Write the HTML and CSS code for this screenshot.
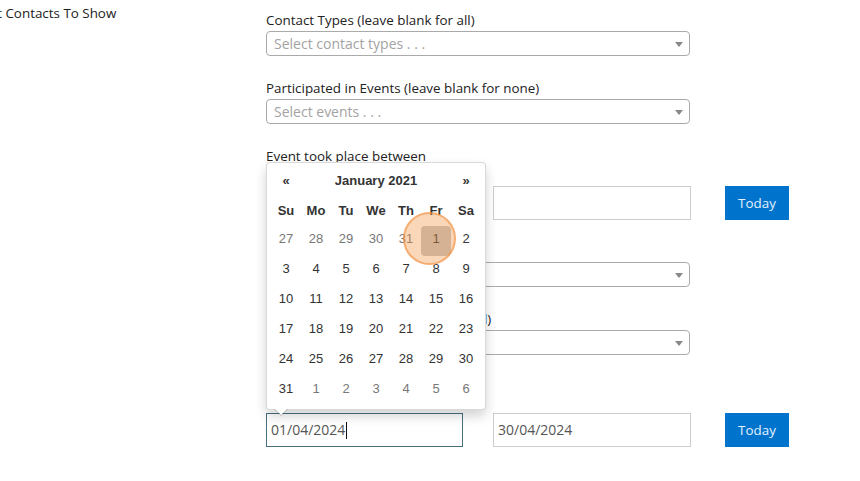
FILE: index.html
```html
<!DOCTYPE html>
<html lang="en">
<head>
<meta charset="utf-8">
<title>Select Contacts To Show</title>
<link rel="stylesheet" href="styles.css">
</head>
<body>
<div class="page">
  <aside class="side">
    <h2 class="side-title">Select Contacts To Show</h2>
  </aside>
  <form class="form">
    <div class="group">
      <label class="label">Contact Types (leave blank for all)</label>
      <div class="select"><span class="ph">Select contact types . . .</span><span class="arrow"></span></div>
    </div>
    <div class="group">
      <label class="label">Participated in Events (leave blank for none)</label>
      <div class="select"><span class="ph">Select events . . .</span><span class="arrow"></span></div>
    </div>
    <div class="group group-date">
      <label class="label label-date">Event took place between</label>
      <div class="date-row">
        <div class="field"></div>
        <div class="field field-2"></div>
        <button type="button" class="btn">Today</button>
      </div>
    </div>
    <div class="group">
      <label class="label">Event Status</label>
      <div class="select"><span class="ph"></span><span class="arrow"></span></div>
    </div>
    <div class="group">
      <label class="label">Contact Statuses (leave blank for all)</label>
      <div class="select"><span class="ph"></span><span class="arrow"></span></div>
    </div>
    <div class="group group-last">
      <label class="label label-last">Contact created between</label>
      <div class="date-row date-row-active">
        <div class="field field-focus">01/04/2024<span class="cursor"></span></div>
        <div class="field field-2">30/04/2024</div>
        <button type="button" class="btn">Today</button>
        <div class="datepicker">
          <table class="cal">
            <thead>
              <tr><th class="nav">&laquo;</th><th class="month" colspan="5">January 2021</th><th class="nav">&raquo;</th></tr>
              <tr class="dow"><th>Su</th><th>Mo</th><th>Tu</th><th>We</th><th>Th</th><th>Fr</th><th>Sa</th></tr>
            </thead>
            <tbody>
              <tr><td class="old">27</td><td class="old">28</td><td class="old">29</td><td class="old">30</td><td class="old">31</td><td class="active">1<span class="click"></span></td><td>2</td></tr>
              <tr><td>3</td><td>4</td><td>5</td><td>6</td><td>7</td><td>8</td><td>9</td></tr>
              <tr><td>10</td><td>11</td><td>12</td><td>13</td><td>14</td><td>15</td><td>16</td></tr>
              <tr><td>17</td><td>18</td><td>19</td><td>20</td><td>21</td><td>22</td><td>23</td></tr>
              <tr><td>24</td><td>25</td><td>26</td><td>27</td><td>28</td><td>29</td><td>30</td></tr>
              <tr><td>31</td><td class="old">1</td><td class="old">2</td><td class="old">3</td><td class="old">4</td><td class="old">5</td><td class="old">6</td></tr>
            </tbody>
          </table>
        </div>
      </div>
    </div>
  </form>
</div>
</body>
</html>
```
FILE: styles.css
```css
* { box-sizing: border-box; }
html, body { margin: 0; padding: 0; background: #fff; }
body {
  font-family: "Open Sans", "Liberation Sans", sans-serif;
  font-size: 13.4px;
  color: #222;
}
.page {
  display: flex;
  align-items: flex-start;
}
.side {
  width: 266px;
  flex: none;
}
.side-title {
  margin: 3px 0 0 -35px;
  font-size: 13.4px;
  font-weight: 400;
  line-height: 20px;
  color: #222;
  white-space: nowrap;
}
.form {
  width: 530px;
  padding-top: 10px;
}
.group {
  margin-bottom: 22px;
}
.label {
  display: block;
  line-height: 21px;
  height: 21px;
  white-space: nowrap;
}
.select {
  width: 424px;
  height: 25px;
  border: 1px solid #aaa;
  border-radius: 4px;
  display: flex;
  align-items: center;
  justify-content: space-between;
  padding: 0 6px 0 7px;
  background: #fff;
}
.ph {
  color: #a3a3a3;
  font-size: 14px;
  line-height: 23px;
}
.arrow {
  width: 0;
  height: 0;
  border-left: 4px solid transparent;
  border-right: 4px solid transparent;
  border-top: 5px solid #888;
  margin-top: 1px;
}
.group-date { margin-bottom: 21px; }
.label-date { margin-bottom: 19px; }
.label-last { margin-bottom: 15px; }
.date-row {
  display: flex;
  align-items: center;
  height: 34px;
  position: relative;
}
.field {
  width: 197px;
  height: 34px;
  border: 1px solid #ccc;
  padding-left: 4px;
  line-height: 32px;
  font-size: 14px;
  color: #555;
  background: #fff;
  display: flex;
  align-items: center;
}
.field-2 {
  width: 198px;
  margin-left: 30px;
}
.field-focus {
  border-color: #46707f;
}
.cursor {
  display: inline-block;
  width: 1px;
  height: 17px;
  background: #111;
  margin-left: 1px;
}
.btn {
  margin-left: 34px;
  width: 64px;
  height: 34px;
  border: 0;
  padding: 0;
  background: #0074cc;
  color: #e4f1ff;
  font-family: "Open Sans", "Liberation Sans", sans-serif;
  font-size: 13.4px;
}
.datepicker {
  position: absolute;
  left: 0;
  bottom: calc(100% + 3px);
  width: 220px;
  padding: 3px 4px;
  background: #fff;
  border: 1px solid rgba(0, 0, 0, 0.15);
  border-radius: 4px;
  box-shadow: 0 6px 12px rgba(0, 0, 0, 0.175);
  z-index: 10;
}
.datepicker::before,
.datepicker::after {
  content: "";
  position: absolute;
  width: 0;
  height: 0;
  border-left: 7px solid transparent;
  border-right: 7px solid transparent;
}
.datepicker::before {
  left: 7px;
  top: 100%;
  border-top: 7px solid rgba(0, 0, 0, 0.2);
}
.datepicker::after {
  left: 8px;
  top: 100%;
  border-left-width: 6px;
  border-right-width: 6px;
  border-top: 6px solid #fff;
}
.cal {
  border-collapse: collapse;
  border-spacing: 0;
  font-family: "Liberation Sans", Arial, sans-serif;
  font-size: 13px;
  color: #333;
}
.cal th,
.cal td {
  width: 30px;
  height: 30px;
  padding: 0;
  text-align: center;
  vertical-align: top;
}
.cal th {
  font-weight: 700;
  line-height: 30px;
}
.cal td { line-height: 25px; }
.cal .month { width: 150px; }
.cal td.old { color: #777; }
.cal td.active {
  position: relative;
  background: #c4c4c4;
  border-radius: 4px;
}
.click {
  position: absolute;
  left: 50%;
  top: 50%;
  width: 53px;
  height: 53px;
  margin: -29px 0 0 -33px;
  border-radius: 50%;
  background: rgba(245, 150, 70, 0.38);
  border: 2px solid rgba(240, 145, 65, 0.6);
}
```
